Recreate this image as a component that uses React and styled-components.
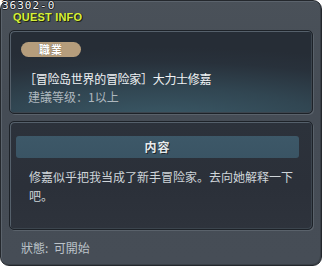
import React from "react";
import styled, { createGlobalStyle } from "styled-components";

const Global = createGlobalStyle`
  html, body { margin: 0; padding: 0; background: #ffffff; }
  body { font-family: "Noto Sans CJK SC", "Noto Sans", sans-serif; }
  * { box-sizing: border-box; }
`;

const Frame = styled.div`
  position: relative;
  width: 322px;
  height: 266px;
  border: 1px solid #24282d;
  border-radius: 9px;
  background: linear-gradient(180deg, #4a5159 0%, #454c55 40%, #464d56 100%);
  box-shadow: inset 1px 1px 0 #5b636c, inset -1px -1px 0 #3a4047;
  padding: 0 8px;
  display: flex;
  flex-direction: column;
`;

const Header = styled.div`
  height: 29px;
  margin: 0 -8px;
  padding: 0 0 0 1px;
  display: flex;
  flex-direction: column;
`;

const QuestId = styled.div`
  font-family: "DejaVu Sans Mono", monospace;
  font-size: 11px;
  line-height: 10px;
  height: 10px;
  letter-spacing: 1px;
  color: #f4f4f4;
  text-shadow: 1px 0 0 #1d2126, -1px 0 0 #1d2126, 0 1px 0 #1d2126, 0 -1px 0 #1d2126;
`;

const Title = styled.div`
  font-family: "Liberation Sans", Arial, sans-serif;
  font-weight: bold;
  font-size: 11px;
  line-height: 10px;
  height: 10px;
  color: #d6f03c;
  margin-left: 11px;
  margin-top: 1px;
  letter-spacing: 0.2px;
  text-shadow: 1px 1px 0 #20240f, 1px 0 0 #2a2f15;
`;

const Card = styled.div`
  position: relative;
  height: ${(p) => p.$h}px;
  border: 1px solid #1d2228;
  border-radius: 5px;
  box-shadow: inset 1px 1px 0 #55606b, inset -1px -1px 0 #3c454e, 1px 1px 0 #5a626b;
  background: ${(p) =>
    p.$teal
      ? "radial-gradient(ellipse 120% 90% at 50% 110%, #3b5a68 0%, #314652 45%, #28313b 80%, #262d36 100%)"
      : "linear-gradient(180deg, #2c323b 0%, #2b3039 60%, #2e333c 100%)"};
  display: flex;
  flex-direction: column;
`;

const InfoCard = styled(Card)`
  padding: 11px 11px 0 11px;
`;

const Badge = styled.div`
  width: 60px;
  height: 15px;
  border-radius: 7.5px;
  background: #b59d7c;
  color: #ffffff;
  font-weight: bold;
  font-size: 11px;
  line-height: 15px;
  text-align: center;
  letter-spacing: 1px;
  text-shadow: 0 0 1px #5a4a36;
`;

const QuestName = styled.div`
  margin-top: 13px;
  margin-left: 3px;
  font-size: 12px;
  line-height: 18px;
  color: #f0f2f4;
  letter-spacing: -0.3px;
`;

const Level = styled.div`
  margin-left: 7px;
  font-size: 12px;
  line-height: 18px;
  color: #aeb7be;
`;

const Gap = styled.div`
  height: 7px;
  flex: none;
`;

const ContentCard = styled(Card)`
  padding: 14px 13px 0 6px;
`;

const SectionBar = styled.div`
  height: 22px;
  border-radius: 3px;
  background: linear-gradient(180deg, #3d5868 0%, #3a5464 100%);
  color: #e6eaec;
  font-weight: bold;
  font-size: 12px;
  line-height: 22px;
  text-align: center;
  letter-spacing: 1px;
  text-shadow: 1px 1px 0 #1d262c;
`;

const Body = styled.div`
  margin: 9px 0 0 13px;
  font-size: 12px;
  line-height: 19px;
  color: #cfd5d9;
  width: 268px;
`;

const Status = styled.div`
  flex: 1;
  display: flex;
  align-items: center;
  padding: 0 0 1px 12px;
  font-size: 12px;
  color: #bcc3c9;
`;

export default function App() {
  return (
    <>
      <Global />
      <Frame>
        <Header>
          <QuestId>36302-0</QuestId>
          <Title>QUEST INFO</Title>
        </Header>
        <InfoCard $h={84} $teal>
          <Badge>職業</Badge>
          <QuestName>［冒险岛世界的冒险家］大力士修嘉</QuestName>
          <Level>建議等级：1以上</Level>
        </InfoCard>
        <Gap />
        <ContentCard $h={109}>
          <SectionBar>内容</SectionBar>
          <Body>修嘉似乎把我当成了新手冒险家。去向她解释一下吧。</Body>
        </ContentCard>
        <Status>狀態:&nbsp;&nbsp;可開始</Status>
      </Frame>
    </>
  );
}
